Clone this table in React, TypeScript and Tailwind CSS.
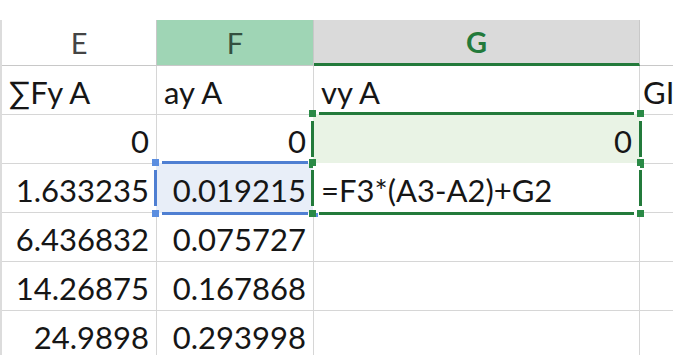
import React from 'react';

type Align = 'left' | 'right';

const rows: { e: string; f: string; g: string; eAlign: Align; fAlign: Align; gAlign: Align; h?: string }[] = [
  { e: '∑Fy A', f: 'ay A', g: 'vy A', eAlign: 'left', fAlign: 'left', gAlign: 'left', h: 'GI' },
  { e: '0', f: '0', g: '0', eAlign: 'right', fAlign: 'right', gAlign: 'right' },
  { e: '1.633235', f: '0.019215', g: '=F3*(A3-A2)+G2', eAlign: 'right', fAlign: 'right', gAlign: 'left' },
  { e: '6.436832', f: '0.075727', g: '', eAlign: 'right', fAlign: 'right', gAlign: 'left' },
  { e: '14.26875', f: '0.167868', g: '', eAlign: 'right', fAlign: 'right', gAlign: 'left' },
  { e: '24.9898', f: '0.293998', g: '', eAlign: 'right', fAlign: 'right', gAlign: 'left' },
  { e: '', f: '', g: '', eAlign: 'right', fAlign: 'right', gAlign: 'left' },
];

function Handle({ className }: { className: string }) {
  return <span className={`absolute w-[7px] h-[7px] ${className}`} />;
}

// reference box with corner handles, drawn over the cell
function RefBox({ color, fill, top }: { color: 'green' | 'blue'; fill: string; top: boolean }) {
  const line = color === 'green' ? 'bg-[#237a3b]' : 'bg-[#4f7fd2]';
  const knob = color === 'green' ? 'bg-[#2a8a46]' : 'bg-[#5b8ee0]';
  return (
    <div className={`absolute inset-[-1px] ${fill} pointer-events-none`}>
      {top && <div className={`absolute top-[-2px] left-[6px] right-[6px] h-[3px] ${line}`} />}
      <div className={`absolute bottom-[-2px] left-[6px] right-[6px] h-[3px] ${line}`} />
      <div className={`absolute left-[-2px] top-[7px] bottom-[7px] w-[3px] ${line}`} />
      <div className={`absolute right-[-2px] top-[7px] bottom-[7px] w-[3px] ${line}`} />
      <Handle className={`${knob} top-[-4px] left-[-4px]`} />
      <Handle className={`${knob} top-[-4px] right-[-4px]`} />
      <Handle className={`${knob} bottom-[-4px] left-[-4px]`} />
      <Handle className={`${knob} bottom-[-4px] right-[-4px]`} />
    </div>
  );
}

function Cell({
  text,
  align,
  children,
  tight = false,
  className = '',
}: {
  text: string;
  align: Align;
  children?: React.ReactNode;
  tight?: boolean;
  className?: string;
}) {
  const pad = tight ? 'justify-start pl-[3px]' : align === 'right' ? 'justify-end pr-[7px]' : 'justify-start pl-[7px]';
  return (
    <div className={`relative h-[49px] border-b border-r border-[#d6d6d6] flex items-end pb-[6px] ${pad} ${className}`}>
      {children}
      <span className="relative whitespace-nowrap">{text}</span>
    </div>
  );
}

export default function App() {
  return (
    <div
      className="w-[673px] h-[355px] overflow-hidden bg-white text-[#161616] text-[31px] leading-none pt-[20px]"
      style={{ fontFamily: 'Lato, "Open Sans", sans-serif' }}
    >
      <div className="grid grid-cols-[155px_157px_326px_120px] border-l-2 border-[#dcdcdc] w-[760px]">
        {/* column headers */}
        <div className="h-[46px] border-b border-r border-[#c8c8c8] flex items-center justify-center text-[29px] text-[#444] bg-white">E</div>
        <div className="h-[46px] border-b border-r border-[#c8c8c8] flex items-center justify-center text-[29px] text-[#33503f] bg-[#9fd5b5]">F</div>
        <div className="h-[46px] border-r border-[#c8c8c8] border-b-[3px] border-b-[#237a3b] flex items-center justify-center text-[29px] text-[#237a3b] font-bold bg-[#dadada]">G</div>
        <div className="h-[46px] border-b border-[#c8c8c8] bg-white" />

        {rows.map((r, i) => (
          <React.Fragment key={i}>
            <Cell text={r.e} align={r.eAlign} />
            <Cell text={r.f} align={r.fAlign} className={i === 2 ? 'z-10' : ''}>
              {i === 2 && <RefBox color="blue" fill="bg-[#e8eef8]" top />}
            </Cell>
            <Cell text={r.g} align={r.gAlign} className={i === 1 || i === 2 ? 'z-20' : ''}>
              {i === 1 && <RefBox color="green" fill="bg-[#e9f3e5]" top />}
              {i === 2 && <RefBox color="green" fill="bg-white" top={false} />}
            </Cell>
            <Cell text={r.h ?? ''} align="left" tight />
          </React.Fragment>
        ))}
      </div>
    </div>
  );
}
